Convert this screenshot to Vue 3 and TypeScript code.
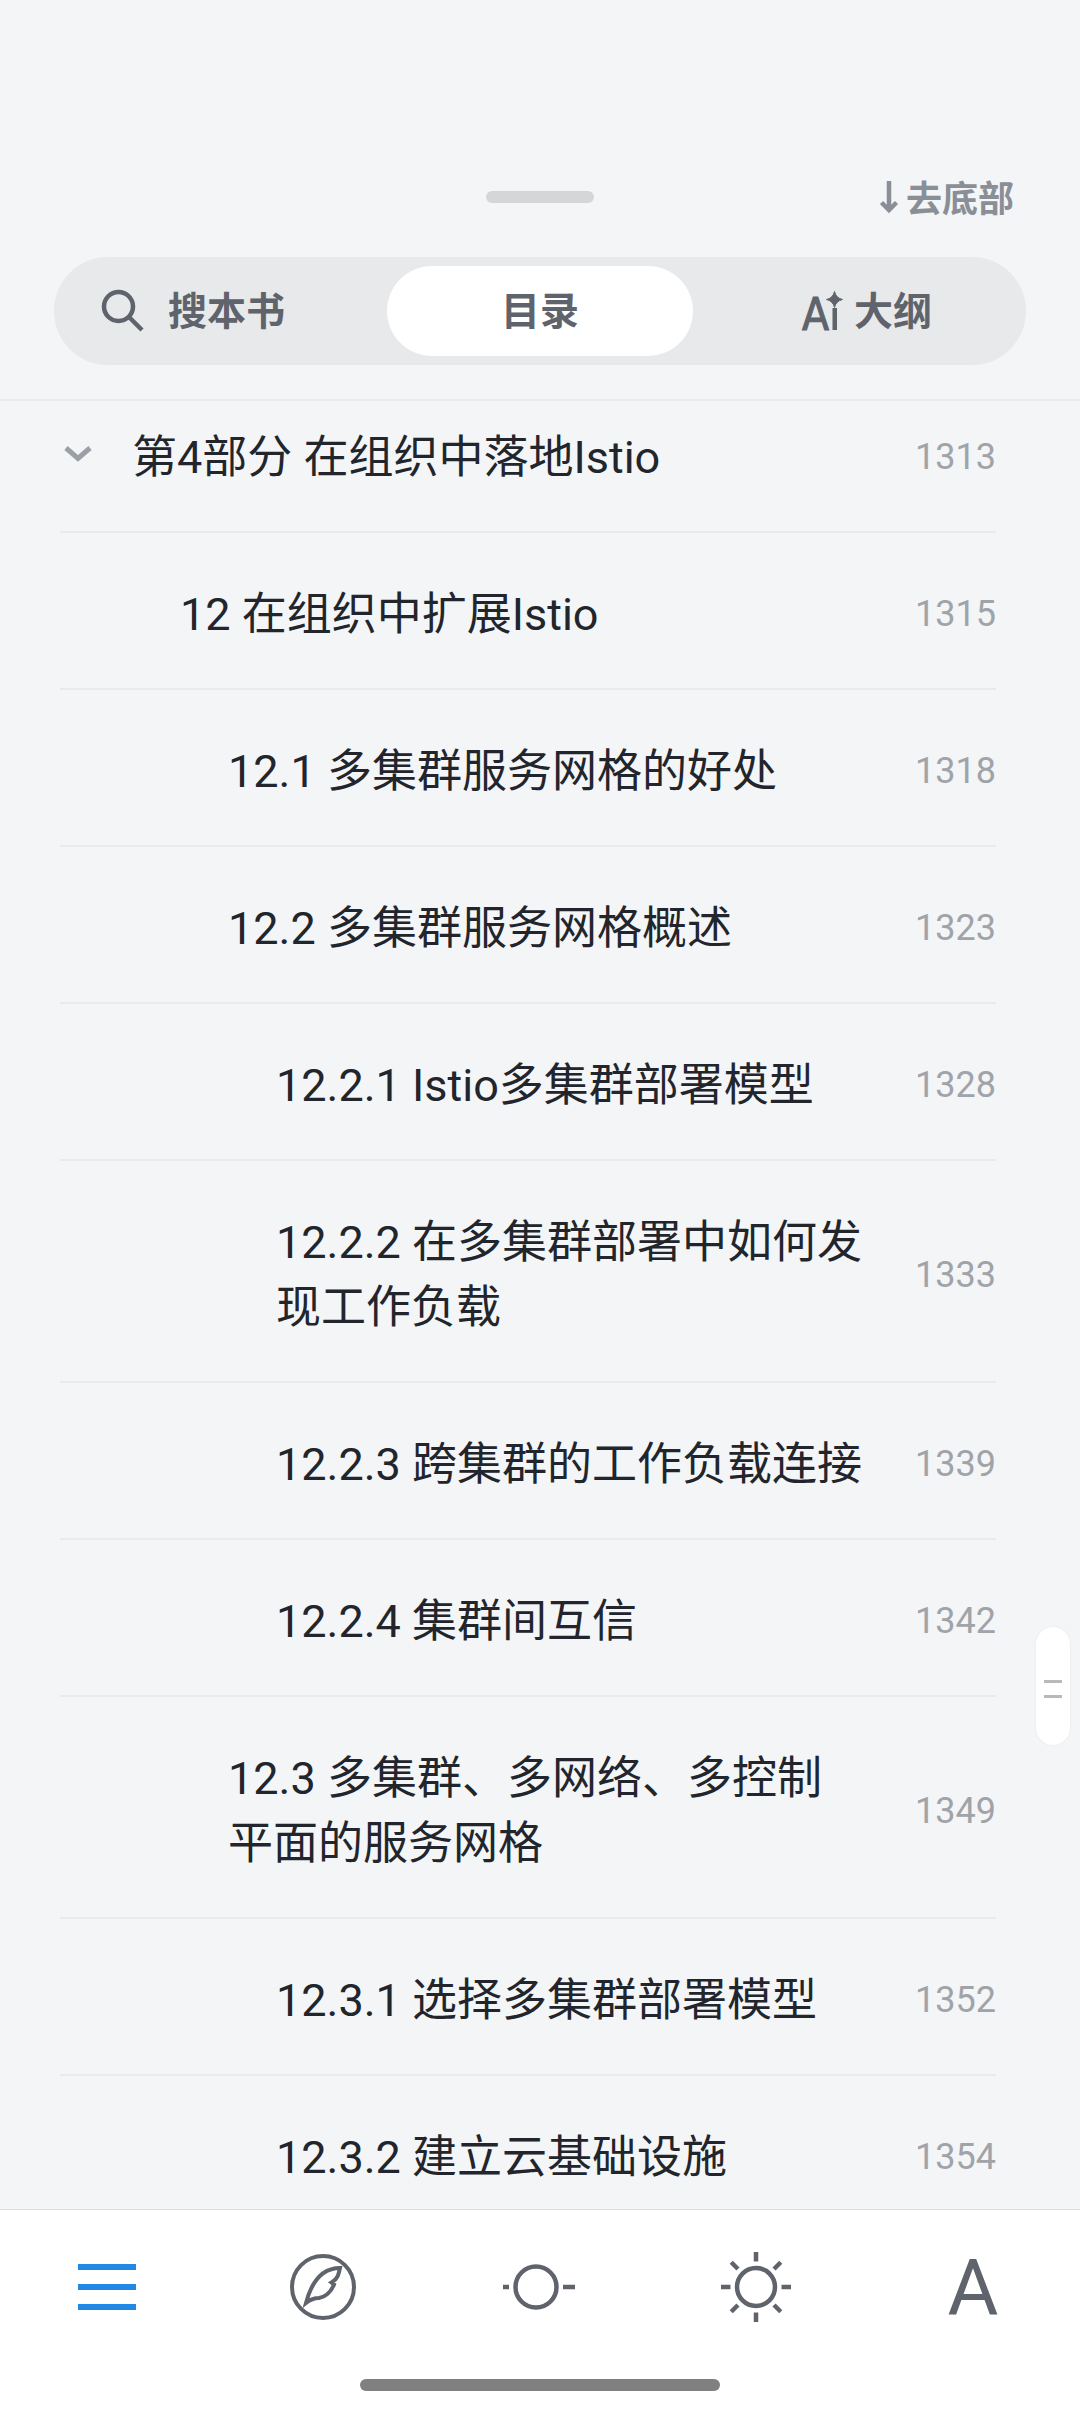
<script setup lang="ts">
import { ref } from 'vue'

interface Chapter {
  title: string
  page: number
  level: number
  expanded?: boolean
}

const chapters: Chapter[] = [
  { title: '第4部分 在组织中落地Istio', page: 1313, level: 0, expanded: true },
  { title: '12 在组织中扩展Istio', page: 1315, level: 1 },
  { title: '12.1 多集群服务网格的好处', page: 1318, level: 2 },
  { title: '12.2 多集群服务网格概述', page: 1323, level: 2 },
  { title: '12.2.1 Istio多集群部署模型', page: 1328, level: 3 },
  { title: '12.2.2 在多集群部署中如何发现工作负载', page: 1333, level: 3 },
  { title: '12.2.3 跨集群的工作负载连接', page: 1339, level: 3 },
  { title: '12.2.4 集群间互信', page: 1342, level: 3 },
  { title: '12.3 多集群、多网络、多控制平面的服务网格', page: 1349, level: 2 },
  { title: '12.3.1 选择多集群部署模型', page: 1352, level: 3 },
  { title: '12.3.2 建立云基础设施', page: 1354, level: 3 },
]

type Tab = 'search' | 'contents' | 'outline'
const activeTab = ref<Tab>('contents')
const rays = [0, 45, 90, 135, 180, 225, 270, 315]
</script>

<template>
  <div class="reader">
    <header class="head">
      <div class="grab-row">
        <span class="grabber"></span>
        <button class="to-bottom" type="button">
          <svg width="18" height="32" viewBox="0 0 18 32" fill="none" stroke="currentColor" stroke-width="4.500">
            <path d="M9 0V29M1.500 21.500L9 29l7.500-7.500" />
          </svg>
          <span class="to-bottom-label">去底部</span>
        </button>
      </div>
      <div class="tabs">
        <button class="tab search" :class="{ active: activeTab === 'search' }" type="button" @click="activeTab = 'search'">
          <svg width="44" height="44" viewBox="0 0 44 44" fill="none" stroke="currentColor" stroke-width="4.500">
            <circle cx="17.500" cy="17.500" r="14.500" />
            <path d="M28 28L41 41" />
          </svg>
          <span class="tab-label">搜本书</span>
        </button>
        <button class="tab" :class="{ active: activeTab === 'contents' }" type="button" @click="activeTab = 'contents'">
          <span class="tab-label">目录</span>
        </button>
        <button class="tab outline" :class="{ active: activeTab === 'outline' }" type="button" @click="activeTab = 'outline'">
          <svg width="42" height="44" viewBox="0 0 42 44" fill="currentColor">
            <text class="ai-letter" x="0" y="41">A</text>
            <rect x="30.500" y="19" width="4.500" height="22" />
            <path d="M32.500 2.500Q34 9 40.500 10.500Q34 12 32.500 18.500Q31 12 24.500 10.500Q31 9 32.500 2.500z" stroke="currentColor" stroke-width="1" />
          </svg>
          <span class="tab-label">大纲</span>
        </button>
      </div>
    </header>

    <main class="body">
      <ul class="list">
        <li v-for="c in chapters" :key="c.page">
          <a class="row" href="#">
            <span class="toggle">
              <svg v-if="c.expanded" width="28" height="18" viewBox="0 0 28 18" fill="none" stroke="currentColor" stroke-width="5">
                <path d="M2 3L14 13.500L26 3" />
              </svg>
            </span>
            <span class="title" :class="'level-' + c.level">{{ c.title }}</span>
            <span class="page">{{ c.page }}</span>
          </a>
        </li>
      </ul>
      <div class="thumb"><i></i><i></i></div>
    </main>

    <footer class="foot">
      <nav class="nav">
        <button class="on" type="button" aria-label="目录">
          <svg width="72" height="72" viewBox="0 0 72 72" fill="none" stroke="currentColor" stroke-width="6">
            <path d="M6 16H64M6 36H64M6 56H64" />
          </svg>
        </button>
        <button type="button" aria-label="笔记">
          <svg width="72" height="72" viewBox="0 0 72 72" fill="none" stroke="currentColor" stroke-width="4">
            <circle cx="35" cy="36" r="31" />
            <path d="M18 52C23 33 33 17 52 17C51 22 50 28 43.500 31.500L46 33.500C43 41 37 46 31 47C26 47 23 48 18 52z" />
          </svg>
        </button>
        <button type="button" aria-label="进度">
          <svg width="72" height="72" viewBox="0 0 72 72" fill="none" stroke="currentColor" stroke-width="4.500">
            <circle cx="32" cy="36" r="20.500" />
            <path d="M-1 36H5M59 36H71" />
          </svg>
        </button>
        <button type="button" aria-label="亮度">
          <svg width="72" height="72" viewBox="0 0 72 72" fill="none" stroke="currentColor" stroke-width="4.500">
            <circle cx="36" cy="36" r="19" />
            <path v-for="r in rays" :key="r" d="M36 1V10.500" :transform="`rotate(${r} 36 36)`" />
          </svg>
        </button>
        <button class="font" type="button" aria-label="字体">A</button>
      </nav>
      <span class="home"></span>
    </footer>
  </div>
</template>

<style>
body {
  margin: 0;
  background: #f3f5f7;
}
</style>

<style scoped>
.reader {
  display: flex;
  flex-direction: column;
  height: 100vh;
  background: #f3f5f7;
  color: #22252c;
  font-family: Roboto, "Noto Sans CJK SC", sans-serif;
}
button {
  margin: 0;
  padding: 0;
  border: 0;
  background: none;
  color: inherit;
  font: inherit;
}
svg {
  display: block;
  flex: none;
  overflow: visible;
}
.head {
  flex: none;
  padding: 167px 54px 34px;
  border-bottom: 2px solid #e9ebec;
}
.grab-row {
  display: grid;
  grid-template-columns: 1fr 108px 1fr;
  align-items: center;
  height: 60px;
  margin-bottom: 30px;
}
.grabber {
  grid-column: 2;
  height: 12px;
  border-radius: 6px;
  background: #d5d6d8;
}
.to-bottom {
  justify-self: end;
  display: flex;
  align-items: center;
  gap: 8px;
  margin-right: 12px;
  color: #8a8e96;
  font-size: 36px;
  font-weight: 700;
  line-height: 54px;
}
.to-bottom-label {
  padding-top: 6px;
}
.tabs {
  display: grid;
  grid-template-columns: repeat(3, 1fr);
  gap: 18px;
  padding: 9px;
  border-radius: 54px;
  background: #e7e9ea;
}
.tab {
  display: flex;
  align-items: center;
  justify-content: center;
  height: 90px;
  border-radius: 45px;
  color: #5f636b;
  font-size: 39px;
  font-weight: 700;
  line-height: 60px;
}
.tab-label {
  padding-top: 2px;
}
.tab.active {
  background: #fff;
}
.search {
  justify-content: flex-start;
  gap: 23px;
  padding-left: 38px;
}
.outline {
  gap: 10px;
  padding-left: 6px;
}
.ai-letter {
  font: 400 44px "DejaVu Sans Condensed", "DejaVu Sans", sans-serif;
  stroke: currentColor;
  stroke-width: 1px;
}
.body {
  position: relative;
  flex: 1;
  min-height: 0;
  overflow: hidden;
}
.list {
  margin: -25px 84px 0 60px;
  padding: 0;
  list-style: none;
}
.row {
  display: flex;
  align-items: center;
  padding: 49px 0 41px;
  border-bottom: 2px solid #e8eaec;
  color: inherit;
  text-decoration: none;
}
.toggle {
  flex: none;
  width: 68px;
  padding: 0 0 8px 4px;
  color: #9c9fa5;
}
.title {
  flex: 1;
  font-size: 45px;
  line-height: 65px;
}
.level-1 { padding-left: 48px; }
.level-2 { padding-left: 96px; }
.level-3 { padding-left: 144px; }
.page {
  flex: none;
  width: 132px;
  color: #a0a3a8;
  font-size: 36px;
  line-height: 65px;
  text-align: right;
}
.thumb {
  position: absolute;
  top: 1226px;
  right: 10px;
  display: flex;
  flex-direction: column;
  align-items: center;
  justify-content: center;
  gap: 12px;
  box-sizing: border-box;
  width: 34px;
  height: 118px;
  padding-top: 6px;
  border-radius: 17px;
  background: #fff;
  box-shadow: 0 0 2px rgba(0, 0, 0, 0.08);
}
.thumb i {
  width: 18px;
  height: 3px;
  background: #b9b9b9;
}
.foot {
  flex: none;
  display: flex;
  flex-direction: column;
  align-items: center;
  padding-bottom: 21px;
  border-top: 1px solid #d9dbdd;
  background: #fff;
}
.nav {
  display: grid;
  grid-template-columns: repeat(5, 1fr);
  width: 100%;
  height: 154px;
  margin-bottom: 15px;
}
.nav button {
  display: flex;
  align-items: center;
  justify-content: center;
  color: #5f636b;
}
.nav .on {
  color: #2188e6;
}
.nav .font {
  padding: 4px 0 0 2px;
  font: 400 78px/78px Roboto, "Noto Sans", sans-serif;
}
.home {
  width: 360px;
  height: 12px;
  border-radius: 6px;
  background: #808080;
}
</style>
